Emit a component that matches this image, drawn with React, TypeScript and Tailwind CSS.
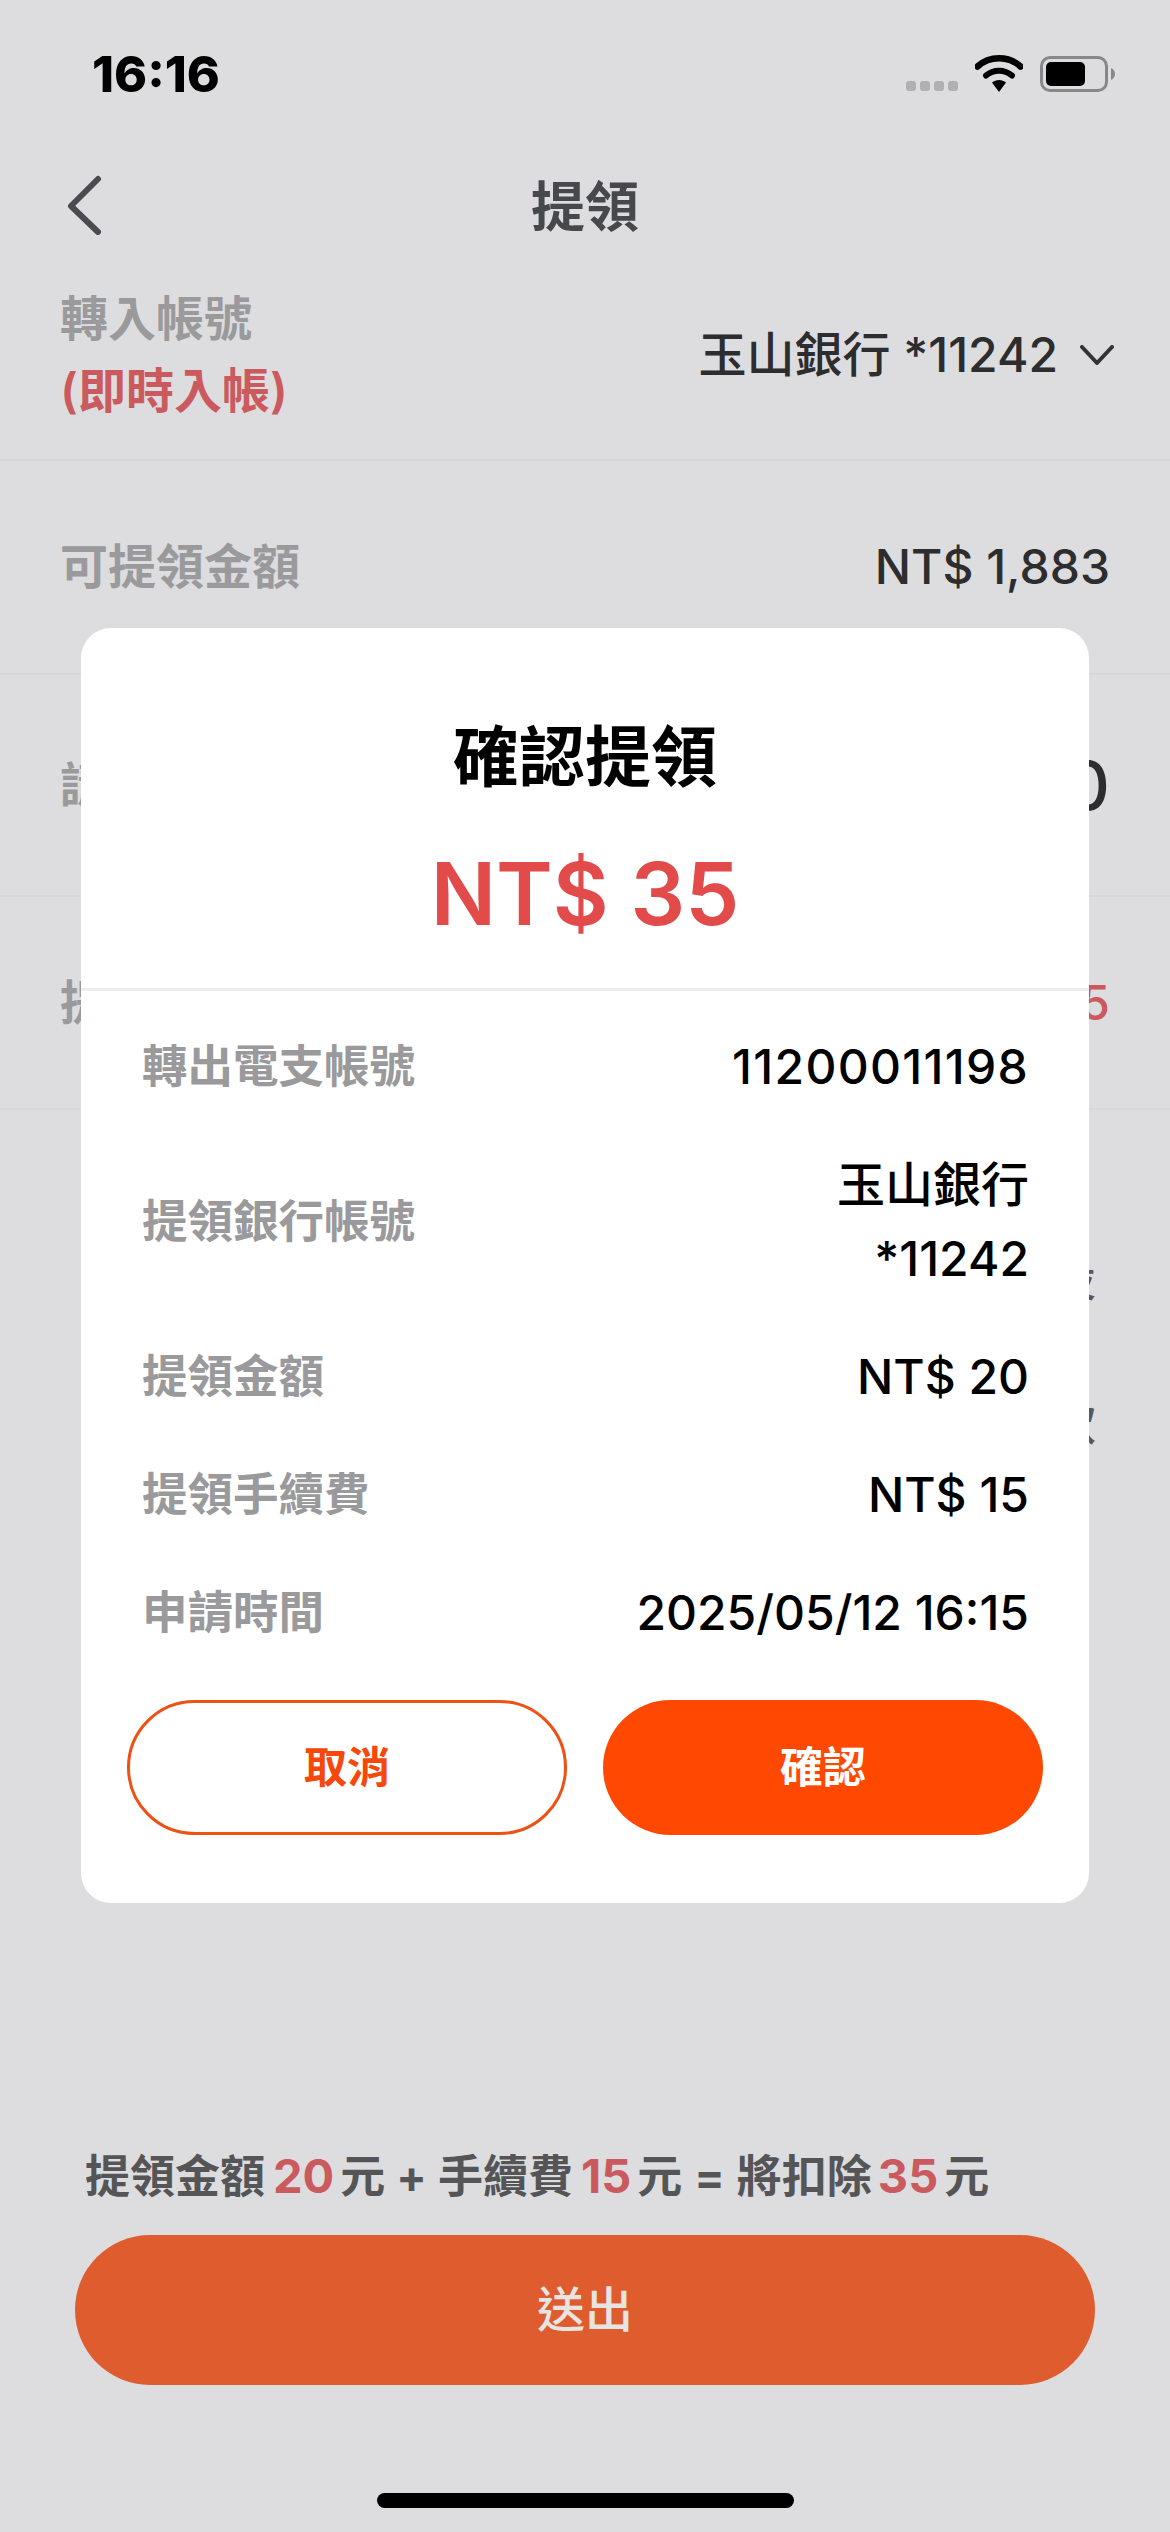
const SANS = "font-['Inter','Noto_Sans_CJK_TC',sans-serif]";

function Row({ label, children }: { label: string; children: React.ReactNode }) {
  return (
    <div className="flex items-center justify-between">
      <span className="text-[45.5px] leading-[60px] font-semibold text-[#9a9a9c]">{label}</span>
      <div className="text-right text-[48px] leading-[74px] font-medium text-black">{children}</div>
    </div>
  );
}

function StatusBar() {
  return (
    <div className="flex h-[151px] items-start justify-between pl-[92px] pr-[55px] pt-[50px]">
      <span className="text-[50px] leading-[48px] font-extrabold text-black">16:16</span>
      <div className="flex items-end pt-[5px]">
        <div className="mb-[1px] flex gap-[4px]">
          {[0, 1, 2, 3].map((i) => (
            <span key={i} className="h-[10px] w-[10px] rounded-[3px] bg-[#b0b0b2]" />
          ))}
        </div>
        <svg className="ml-[17px]" width="48" height="37" viewBox="0 0 48 37" fill="none">
          <path d="M2.5 11.5C14.5 0.5 33.5 0.5 45.5 11.5" stroke="#000" strokeWidth="6.5" strokeLinecap="round" />
          <path d="M11 20.5C18.5 14 29.5 14 37 20.5" stroke="#000" strokeWidth="6" strokeLinecap="round" />
          <path d="M17 27.5C21 24 27 24 31 27.5L24 37Z" fill="#000" />
        </svg>
        <div className="ml-[17px] flex h-[36px] w-[68px] items-center rounded-[10px] border-[3px] border-[#87878a] p-[3px]">
          <div className="h-full w-[39px] rounded-[5px] bg-black" />
        </div>
        <svg className="mb-[12px] ml-[3px]" width="4" height="12" viewBox="0 0 4 12">
          <path d="M0 0C2.5 1 4 3.5 4 6C4 8.5 2.5 11 0 12Z" fill="#87878a" />
        </svg>
      </div>
    </div>
  );
}

function Modal() {
  return (
    <div className="absolute left-[81px] top-[628px] flex h-[1275px] w-[1008px] flex-col rounded-[30px] bg-white">
      <div className="flex h-[363px] flex-col items-center border-b-[3px] border-[#eeeeee] pt-[94px]">
        <h2 className="text-[66px] leading-[70px] font-bold text-black">確認提領</h2>
        <p className="mt-[46px] text-[86px] leading-[112px] font-semibold text-[#e34b4b]">NT$ 35</p>
      </div>
      <div className="flex flex-col gap-[44px] pl-[61px] pr-[60px] pt-[39px]">
        <Row label="轉出電支帳號">
          <span className="tracking-[1.3px]">11200011198</span>
        </Row>
        <Row label="提領銀行帳號">
          <div>玉山銀行</div>
          <div>*11242</div>
        </Row>
        <Row label="提領金額">NT$ 20</Row>
        <Row label="提領手續費">NT$ 15</Row>
        <Row label="申請時間">2025/05/12 16:15</Row>
      </div>
      <div className="mt-[50px] flex gap-[36px] px-[46px]">
        <button className="flex h-[135px] w-[440px] items-center justify-center rounded-full border-[3px] border-[#ef5014] text-[43px] font-bold text-[#f5480a]">
          取消
        </button>
        <button className="flex h-[135px] w-[440px] items-center justify-center rounded-full bg-[#ff4802] text-[43px] font-bold text-white">
          確認
        </button>
      </div>
    </div>
  );
}

export default function App() {
  return (
    <div className={`${SANS} relative flex h-[2532px] w-[1170px] flex-col overflow-hidden bg-[#dddde0]`}>
      <StatusBar />
      <div className="relative flex h-[112px] shrink-0 items-center justify-center">
        <svg className="absolute left-[66px] top-[24px]" width="36" height="60" viewBox="0 0 36 60" fill="none">
          <path d="M32 4L5 31L32 57" stroke="#4a4b50" strokeWidth="6" strokeLinecap="round" strokeLinejoin="round" />
        </svg>
        <h1 className="text-[54px] font-semibold text-[#47484c]">提領</h1>
      </div>

      <div className="flex h-[198px] shrink-0 items-center justify-between border-b-[2px] border-[#d7d7da] pb-[12px] pl-[60px] pr-[56px]">
        <div className="text-[48px] leading-[72px] font-semibold">
          <div className="text-[#9a9a9c]">轉入帳號</div>
          <div className="text-[#cb5a5e]">(即時入帳)</div>
        </div>
        <div className="flex items-center gap-[22px] text-[48px] font-medium text-[#2d2d2f]">
          <span>玉山銀行 *11242</span>
          <svg width="34" height="20" viewBox="0 0 34 20" fill="none">
            <path d="M2 2L17 18L32 2" stroke="#333336" strokeWidth="4" strokeLinecap="round" strokeLinejoin="round" />
          </svg>
        </div>
      </div>

      <div className="flex h-[214px] shrink-0 items-center justify-between border-b-[2px] border-[#d7d7da] pl-[60px] pr-[60px] text-[48px] font-medium">
        <span className="font-semibold text-[#9a9a9c]">可提領金額</span>
        <span className="text-[#2d2d2f]">NT$ 1,883</span>
      </div>

      <div className="flex h-[222px] shrink-0 items-center justify-between border-b-[2px] border-[#d7d7da] pl-[60px] pr-[60px] font-medium">
        <span className="text-[48px] font-semibold text-[#9a9a9c]">請輸入提領金額</span>
        <span className="text-[68px] text-[#2d2d2f]">20</span>
      </div>

      <div className="flex h-[213px] shrink-0 items-center justify-between border-b-[2px] border-[#d7d7da] pl-[60px] pr-[60px] text-[48px] font-medium">
        <span className="font-semibold text-[#9a9a9c]">提領手續費</span>
        <span className="text-[#cb5a5e]">NT$ 15</span>
      </div>

      <div className="flex flex-col items-end gap-[96px] pr-[74px] pt-[145px] text-[48px] leading-[48px] font-medium text-[#58585b]">
        <span>設</span>
        <span>款</span>
      </div>

      <div className="mt-auto px-[75px]">
        <p className="flex items-baseline pl-[10px] text-[45px] leading-[60px] font-semibold whitespace-nowrap text-[#555557]">
          <span>提領金額</span>
          <span className="ml-[8px] mr-[6px] text-[47px] font-bold text-[#cb5a5e]">20</span>
          <span>元</span>
          <span className="mx-[11px] font-bold">+</span>
          <span>手續費</span>
          <span className="ml-[8px] mr-[6px] text-[47px] font-bold text-[#cb5a5e]">15</span>
          <span>元</span>
          <span className="mx-[12px] font-bold">=</span>
          <span>將扣除</span>
          <span className="mx-[6px] text-[47px] font-bold text-[#cb5a5e]">35</span>
          <span>元</span>
        </p>
        <button className="mt-[28px] flex h-[150px] w-full items-center justify-center rounded-full bg-[#df5c2e] text-[48px] font-medium text-[#e8e4e2]">
          送出
        </button>
      </div>
      <div className="mx-auto mb-[24px] mt-[108px] h-[15px] w-[417px] rounded-full bg-black" />

      <Modal />
    </div>
  );
}
